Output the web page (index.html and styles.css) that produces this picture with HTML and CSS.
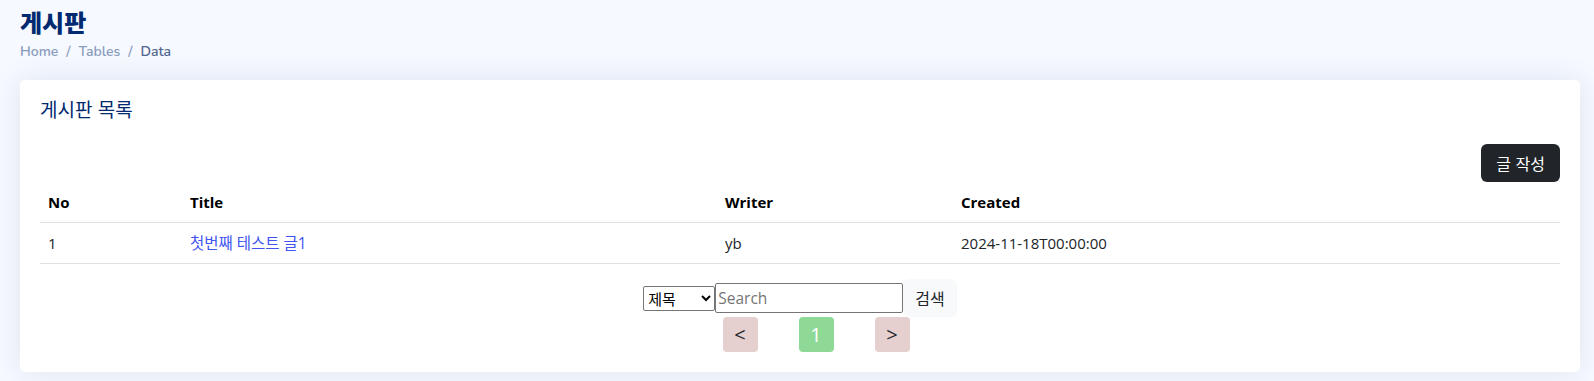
FILE: index.html
```html
<!DOCTYPE html>
<html lang="ko">

<head>
    <meta charset="UTF-8">
    <meta name="viewport" content="width=device-width, initial-scale=1.0">
    <title>게시판</title>
    <link rel="stylesheet" href="styles.css">
</head>

<body>

    <main class="main">

        <div class="pagetitle">
            <h1>게시판</h1>
            <nav>
                <ol class="breadcrumb">
                    <li><a href="#">Home</a></li>
                    <li><a href="#">Tables</a></li>
                    <li class="active">Data</li>
                </ol>
            </nav>
        </div>

        <section class="card">
            <div class="card-body">
                <h5 class="card-title">게시판 목록</h5>

                <div class="write-row">
                    <button type="button" class="btn-dark">글 작성</button>
                </div>

                <table class="table">
                    <thead>
                        <tr>
                            <th class="col-no">No</th>
                            <th class="col-title">Title</th>
                            <th class="col-writer">Writer</th>
                            <th>Created</th>
                        </tr>
                    </thead>
                    <tbody>
                        <tr>
                            <td>1</td>
                            <td><a href="#">첫번째 테스트 글1</a></td>
                            <td>yb</td>
                            <td>2024-11-18T00:00:00</td>
                        </tr>
                    </tbody>
                </table>

                <form class="search">
                    <select name="type">
                        <option>제목</option>
                        <option>내용</option>
                        <option>작성자</option>
                    </select>
                    <input type="text" placeholder="Search">
                    <button type="button" class="btn-light">검색</button>
                </form>

                <ul class="paging">
                    <li><a href="#" class="prev">&lt;</a></li>
                    <li><a href="#" class="current">1</a></li>
                    <li><a href="#" class="next">&gt;</a></li>
                </ul>
            </div>
        </section>

    </main>

</body>

</html>
```

FILE: styles.css
```css
body {
    margin: 0;
    font-family: "Open Sans", "Noto Sans CJK KR", sans-serif;
    background: #f6f9ff;
    color: #444444;
}

.main {
    padding: 0 14px 9px 20px;
}

.pagetitle {
    padding-top: 8px;
    margin-bottom: 18px;
}

.pagetitle h1 {
    margin: 0;
    font-family: "Nunito", "Lato", "Noto Sans CJK KR", sans-serif;
    font-size: 24px;
    font-weight: 900;
    line-height: 32px;
    color: #012970;
}

.breadcrumb {
    display: flex;
    list-style: none;
    margin: 2px 0 0;
    padding: 0;
    font-family: "Nunito", "Lato", sans-serif;
    font-size: 14px;
    font-weight: 600;
    line-height: 20px;
    color: #899bbd;
}

.breadcrumb li + li::before {
    content: "/";
    padding: 0 8px;
    color: #899bbd;
}

.breadcrumb a {
    color: #899bbd;
    text-decoration: none;
}

.breadcrumb .active {
    color: #51678f;
}

.card {
    background: #ffffff;
    border-radius: 5px;
    box-shadow: 0px 0 30px rgba(1, 41, 112, 0.1);
}

.card-body {
    padding: 0 20px 20px;
}

.card-title {
    margin: 0;
    padding: 17px 0 15px;
    font-family: "Noto Sans CJK KR", sans-serif;
    font-size: 19px;
    font-weight: 400;
    line-height: 24px;
    color: #012970;
}

.write-row {
    display: flex;
    justify-content: flex-end;
    padding-top: 8px;
}

.btn-dark {
    height: 38px;
    padding: 0 15px;
    border: none;
    border-radius: 6px;
    background: #212529;
    color: #ffffff;
    font-family: "Noto Sans CJK KR", sans-serif;
    font-size: 16px;
    cursor: pointer;
}

.table {
    width: 100%;
    border-collapse: collapse;
    font-size: 15px;
    color: #212529;
}

.table th,
.table td {
    padding: 8px;
    line-height: 24px;
    text-align: left;
    border-bottom: 1px solid #dee2e6;
}

.table th {
    font-weight: 700;
    color: #000000;
}

.col-no {
    width: 126px;
}

.col-title {
    width: 519px;
}

.col-writer {
    width: 220px;
}

.table a {
    color: #4154f1;
    font-size: 15.5px;
    text-decoration: none;
}

.search {
    display: flex;
    justify-content: center;
    align-items: center;
    margin-top: 15px;
}

.search select {
    width: 72px;
    height: 25px;
    font-family: "Noto Sans CJK KR", sans-serif;
    font-size: 15px;
    border: 1px solid #767676;
    border-radius: 2px;
    background: #ffffff;
    color: #000000;
}

.search input {
    width: 188px;
    height: 30px;
    box-sizing: border-box;
    padding: 1px 2px;
    border: 1px solid #767676;
    border-radius: 2px;
    font-family: "Open Sans", sans-serif;
    font-size: 15.5px;
}

.btn-light {
    height: 38px;
    padding: 0 12px;
    border: none;
    border-radius: 6px;
    background: #f8f9fa;
    color: #212529;
    font-family: "Noto Sans CJK KR", sans-serif;
    font-size: 16px;
    cursor: pointer;
}

.paging {
    display: flex;
    justify-content: center;
    gap: 41px;
    list-style: none;
    margin: 0;
    padding: 0 0 0 32px;
}

.paging a {
    display: flex;
    justify-content: center;
    align-items: center;
    width: 35px;
    height: 35px;
    border-radius: 4px;
    font-size: 20px;
    text-decoration: none;
    color: #212529;
    background: #e6cfcf;
}

.paging .current {
    background: #8fd997;
    color: #ffffff;
}
```
